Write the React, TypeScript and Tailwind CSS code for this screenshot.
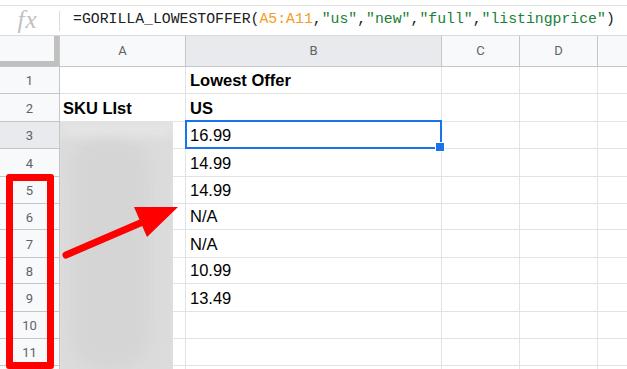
import React from 'react';

const cols = [
  { key: 'A', w: 'w-[126px]' },
  { key: 'B', w: 'w-[256px]' },
  { key: 'C', w: 'w-[78px]' },
  { key: 'D', w: 'w-[78px]' },
];

const rows: { n: number; h: string; a?: string; b?: string; bold?: boolean }[] = [
  { n: 1, h: 'h-[27px]', b: 'Lowest Offer', bold: true },
  { n: 2, h: 'h-[28px]', a: 'SKU LIst', b: 'US', bold: true },
  { n: 3, h: 'h-[27px]', b: '16.99' },
  { n: 4, h: 'h-[28px]', b: '14.99' },
  { n: 5, h: 'h-[27px]', b: '14.99' },
  { n: 6, h: 'h-[26px]', b: 'N/A' },
  { n: 7, h: 'h-[28px]', b: 'N/A' },
  { n: 8, h: 'h-[26px]', b: '10.99' },
  { n: 9, h: 'h-[28px]', b: '13.49' },
  { n: 10, h: 'h-[27px]' },
  { n: 11, h: 'h-[27px]' },
  { n: 12, h: 'h-[27px]' },
];

export default function App() {
  return (
    <div className="relative w-[627px] h-[369px] overflow-hidden bg-white font-['Liberation_Sans',Arial,sans-serif]">
      {/* Formula bar */}
      <div className="h-[6px] border-b border-[#e1e3e1]" />
      <div className="h-[30px] flex items-center border-b border-[#d7d9dc]">
        <div className="w-[59px] flex justify-center pb-[3px] pr-[4px]">
          <span className="font-['Liberation_Serif',serif] italic text-[25px] leading-none text-[#bfc1c3] tracking-[1px]">fx</span>
        </div>
        <div className="w-px h-[20px] bg-[#dadce0]" />
        <div className="ml-[13px] pb-[3px] font-['Liberation_Mono',monospace] text-[14.8px] text-[#202124] whitespace-nowrap">
          =GORILLA_LOWESTOFFER(<span className="text-[#f29d23]">A5:A11</span>,
          <span className="text-[#188038]">"us"</span>,
          <span className="text-[#188038]">"new"</span>,
          <span className="text-[#188038]">"full"</span>,
          <span className="text-[#188038]">"listingprice"</span>)
        </div>
      </div>

      {/* Column headers */}
      <div className="flex h-[31px] border-b border-[#c4c7c5]">
        <div className="w-[60px] shrink-0 border-r border-[#c4c7c5] bg-[#f8f9fa]">
          <div className="w-[59px] h-full border-r-[5px] border-b-[5px] border-[#c0c0c0] bg-[#f8f9fa]" />
        </div>
        {cols.map((c) => (
          <div
            key={c.key}
            className={`${c.w} shrink-0 flex items-center justify-center border-r border-[#c4c7c5] font-['Roboto',sans-serif] text-[13px] text-[#5f6368] ${
              c.key === 'B' ? 'bg-[#e8eaed]' : 'bg-[#f8f9fa]'
            }`}
          >
            {c.key}
          </div>
        ))}
        <div className="flex-1 bg-[#f8f9fa]" />
      </div>

      {/* Rows */}
      {rows.map((r) => (
        <div key={r.n} className={`flex ${r.h}`}>
          <div
            className={`w-[60px] shrink-0 flex items-center justify-center pt-[2px] border-r border-b border-[#c4c7c5] font-['Roboto',sans-serif] text-[13px] text-[#5f6368] ${
              r.n === 3 ? 'bg-[#e8eaed]' : 'bg-[#f8f9fa]'
            }`}
          >
            {r.n < 12 ? r.n : ''}
          </div>
          <div className={`w-[126px] shrink-0 flex items-end pl-[3px] border-r border-b border-[#e2e3e3] text-[16.5px] text-black ${r.bold ? 'font-bold' : ''}`}>
            {r.a}
          </div>
          <div className={`w-[256px] shrink-0 flex items-end pl-[4px] border-r border-b border-[#e2e3e3] text-[16.5px] text-black ${r.bold ? 'font-bold' : ''}`}>
            {r.b}
          </div>
          <div className="w-[78px] shrink-0 border-r border-b border-[#e2e3e3]" />
          <div className="w-[78px] shrink-0 border-r border-b border-[#e2e3e3]" />
          <div className="flex-1 border-b border-[#e2e3e3]" />
        </div>
      ))}

      {/* Selection on B3 */}
      <div className="absolute left-[185px] top-[120px] w-[257px] h-[29px] border-2 border-[#1a73e8]" />
      <div className="absolute left-[435px] top-[142px] w-[10px] h-[10px] bg-[#1a73e8] border border-white" />

      {/* Blurred SKU column */}
      <div className="absolute left-[60px] top-[122px] w-[113px] h-[260px] overflow-hidden">
        <div className="absolute inset-[-6px] bg-[#dcdcdc] blur-[4px]" />
        <div className="absolute left-[10px] top-[10px] w-[80px] h-[240px] bg-[#d5d5d5] blur-[8px] rounded-full" />
        <div className="absolute left-[0px] top-[0px] w-[113px] h-[14px] bg-[#e6e6e6] blur-[6px]" />
      </div>

      {/* Red box around rows 5-11 */}
      <div className="absolute left-[6px] top-[174px] w-[48px] h-[195px] border-[7px] border-[#ff0000] rounded-[3px]" />

      {/* Red arrow */}
      <svg className="absolute left-0 top-0" width="627" height="369" viewBox="0 0 627 369">
        <line x1="66" y1="255" x2="145" y2="221" stroke="#ff0000" strokeWidth="7" strokeLinecap="round" />
        <polygon points="134,207 178,207 147,237" fill="#ff0000" />
      </svg>
    </div>
  );
}
